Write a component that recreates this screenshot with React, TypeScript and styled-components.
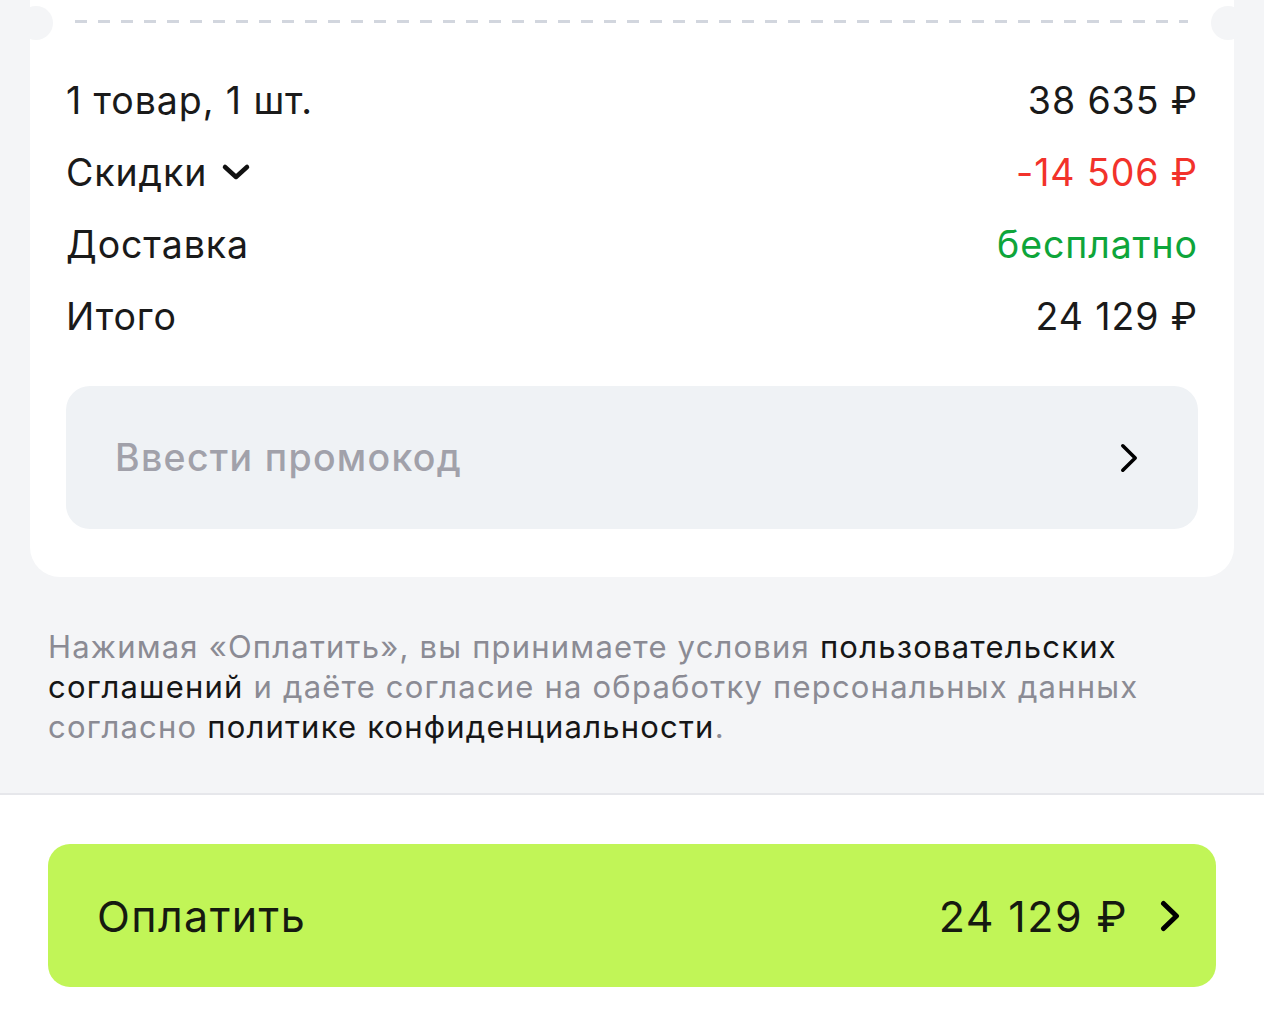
import * as React from 'react';
import styled, {createGlobalStyle} from 'styled-components';

const GlobalStyle = createGlobalStyle`
    html, body {
        margin: 0;
        padding: 0;
        background: #f4f5f7;
        font-family: Inter, "Noto Sans", sans-serif;
        color: #1a1a1a;
        -webkit-font-smoothing: antialiased;
    }
`

const Page = styled.div`
    width: 1264px;
    height: 1020px;
    overflow: hidden;
    display: flex;
    flex-direction: column;
    background: #f4f5f7;
`
const Card = styled.div`
    position: relative;
    margin: 0 30px;
    background: #ffffff;
    border-radius: 0 0 30px 30px;
    padding: 20px 36px 48px;
`
const Notch = styled.div<{side: 'left' | 'right'}>`
    position: absolute;
    top: 6px;
    ${p => p.side === 'left' ? 'left: -11px;' : 'right: -11px;'}
    width: 34px;
    height: 34px;
    border-radius: 50%;
    background: #f4f5f7;
`
const Dashes = styled.div`
    height: 3px;
    margin: 0 10px 41px 9px;
    background: repeating-linear-gradient(90deg, #d2d6de 0 12px, transparent 12px 23px);
`
const Row = styled.div`
    display: flex;
    justify-content: space-between;
    align-items: center;
    height: 72px;
    font-size: 37.5px;
    letter-spacing: 0.9px;
`
const Label = styled.span`
    display: flex;
    align-items: center;
    gap: 14px;
`
const Value = styled.span<{tone?: 'red' | 'green'}>`
    color: ${p => p.tone === 'red' ? '#f2322b' : p.tone === 'green' ? '#0ea53a' : '#1a1a1a'};
`
const Promo = styled.div`
    margin-top: 34px;
    height: 143px;
    border-radius: 24px;
    background: #eff2f5;
    display: flex;
    align-items: center;
    justify-content: space-between;
    padding: 0 60px 0 49px;
    font-size: 37.5px;
    font-weight: 500;
    color: #a1a1aa;
    letter-spacing: 1.3px;
`
const Legal = styled.p`
    margin: 50px 48px 46px;
    font-size: 31px;
    line-height: 40px;
    color: #8b8b94;
    letter-spacing: 1.2px;
`
const Dark = styled.span`
    color: #161616;
`
const Footer = styled.div`
    flex: 1;
    background: #ffffff;
    border-top: 2px solid #e6e7eb;
    padding: 49px 48px 0;
`
const PayButton = styled.div`
    height: 143px;
    border-radius: 22px;
    background: #c1f557;
    display: flex;
    align-items: center;
    justify-content: space-between;
    padding: 0 36px 0 49px;
    font-size: 43px;
    letter-spacing: 1.4px;
    color: #161a10;
`
const PayRight = styled.div`
    display: flex;
    align-items: center;
    gap: 32px;
`

const ChevronDown = () => (
    <svg width="30" height="18" viewBox="0 0 30 18">
        <path d="M4 4 L15 14 L26 4" fill="none" stroke="#111" strokeWidth="4.5" strokeLinecap="round" strokeLinejoin="round"/>
    </svg>
)

const ChevronRight = ({w, h, sw}: {w: number; h: number; sw: number}) => (
    <svg width={w} height={h} viewBox={`0 0 ${w} ${h}`}>
        <path d={`M${sw / 2 + 1} ${sw / 2 + 1} L${w - sw / 2 - 1} ${h / 2} L${sw / 2 + 1} ${h - sw / 2 - 1}`} fill="none" stroke="#000" strokeWidth={sw} strokeLinecap="round" strokeLinejoin="round"/>
    </svg>
)

export default function App() {
    return (
        <>
            <GlobalStyle/>
            <Page>
                <Card>
                    <Notch side="left"/>
                    <Notch side="right"/>
                    <Dashes/>
                    <Row><Label>1 товар, 1 шт.</Label><Value>38 635 ₽</Value></Row>
                    <Row><Label>Скидки <ChevronDown/></Label><Value tone="red">-14 506 ₽</Value></Row>
                    <Row><Label>Доставка</Label><Value tone="green">бесплатно</Value></Row>
                    <Row><Label>Итого</Label><Value>24 129 ₽</Value></Row>
                    <Promo>
                        Ввести промокод
                        <ChevronRight w={18} h={30} sw={3.6}/>
                    </Promo>
                </Card>
                <Legal>
                    Нажимая «Оплатить», вы принимаете условия <Dark>пользовательских соглашений</Dark> и даёте согласие на обработку персональных данных согласно <Dark>политике конфиденциальности</Dark>.
                </Legal>
                <Footer>
                    <PayButton>
                        Оплатить
                        <PayRight>
                            24 129 ₽
                            <ChevronRight w={20} h={32} sw={5}/>
                        </PayRight>
                    </PayButton>
                </Footer>
            </Page>
        </>
    );
}
